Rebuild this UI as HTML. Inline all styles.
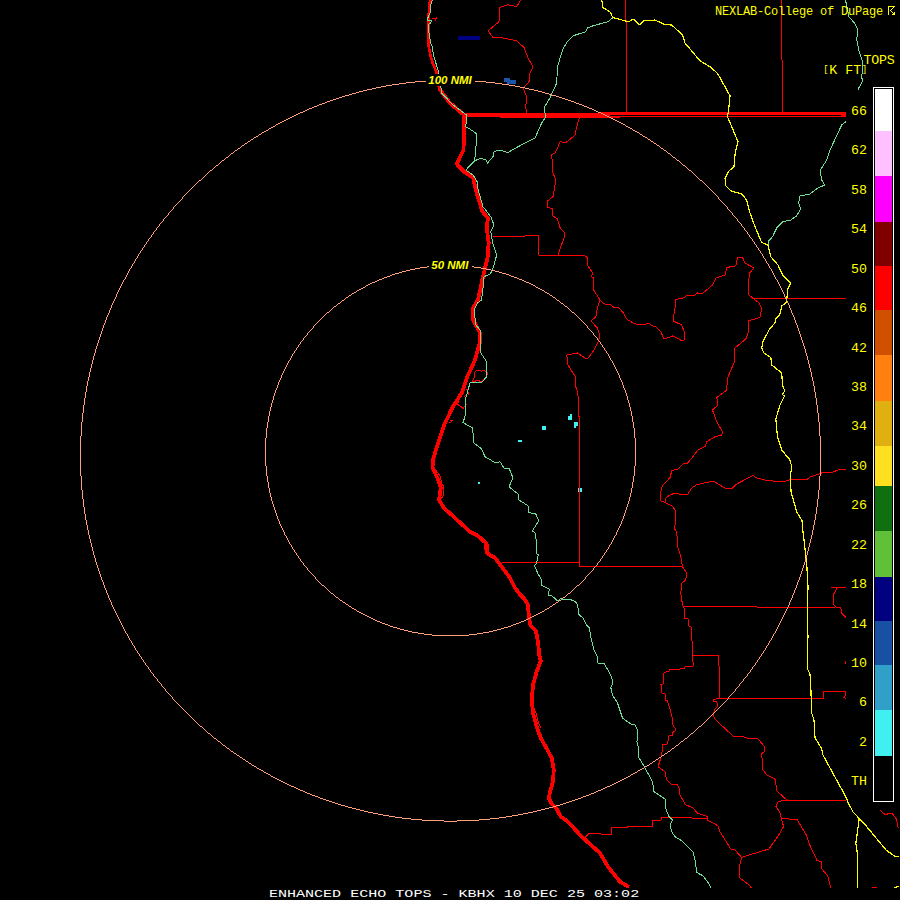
<!DOCTYPE html>
<html><head><meta charset="utf-8"><title>ENHANCED ECHO TOPS - KBHX</title>
<style>
html,body{margin:0;padding:0;background:#000;}
body{width:900px;height:900px;overflow:hidden;}
svg{display:block;}
polyline{fill:none;stroke-linejoin:round;stroke-linecap:butt;}
.c{stroke:#ff0000;stroke-width:3.8;}
.r{stroke:#ff0000;stroke-width:1;}
.g{stroke:#70dc96;stroke-width:1;}
.y{stroke:#ffff00;stroke-width:1.2;}
text{font-family:"Liberation Mono",monospace;fill:#ffff00;}
.t1{font-size:12px;letter-spacing:-0.2px;}
.t2{font-size:13.3px;letter-spacing:0.02px;}
.lb{font-size:13.3px;letter-spacing:0.02px;}
.nm{font-family:"Liberation Sans",sans-serif;font-weight:bold;font-style:italic;font-size:11.5px;}
.bt{fill:#fff;font-size:11.4px;}
</style></head>
<body>
<svg width="900" height="900" viewBox="0 0 900 900">
<rect width="900" height="900" fill="#000"/>
<g shape-rendering="crispEdges">
<!-- radar echoes -->
<rect x="458" y="36" width="22" height="4" fill="#000080"/>
<rect x="504" y="78" width="6" height="4" fill="#1a55aa"/>
<rect x="507" y="80" width="9" height="4" fill="#1a55aa"/>
<rect x="542" y="426" width="4" height="4" fill="#40f0f0"/>
<rect x="518" y="440" width="4" height="2" fill="#40f0f0"/>
<rect x="568" y="416" width="4" height="4" fill="#40f0f0"/>
<rect x="570" y="414" width="2" height="2" fill="#40f0f0"/>
<rect x="574" y="422" width="4" height="4" fill="#40f0f0"/>
<rect x="574" y="426" width="2" height="2" fill="#40f0f0"/>
<rect x="478" y="482" width="2" height="2" fill="#40f0f0"/>
<rect x="578" y="488" width="4" height="4" fill="#40f0f0"/>
</g>
<g shape-rendering="crispEdges">
<polyline class="r" points="520.8,0 516.7,6.7 508,4.7 499.7,7.5 499,21.7 488,30.8 493,37.5 503,38 516.7,40.8 524,47.5 528,58 533,66.7 529,75 529,81.7 523,88 526.7,96.7 525.8,106.7 526.7,115"/>
<polyline class="r" points="579.7,116.7 576.7,126.7 575,135 571.7,138 565.8,142.5 560,141.7 556.7,150 555,153 551,155 553,163 552.5,171.7 555.8,180 553,196.7 550,199 547.5,201 547.3,207 550,208 552.5,208 552.5,215.8 557.5,219 560,227.5 564.7,233 564,238 560.8,246.7 558,255"/>
<polyline class="r" points="492.5,236 525,236 525,235 538.7,235 538.7,255 584,255 587.5,258 587.5,265 592.5,273 591.7,276.7 593.7,278 593.7,290 600,300"/>
<polyline class="r" points="600,300 597.5,308 595.8,316.7 591,321 597.5,328 600,336 598,341.7 593,351.7 588,358 585,358 577.5,353 566.7,355 568,365 575.8,377.5 575,385 577.5,391 578.5,400 578.5,416 579.5,416.5 579.5,566.5 682.5,566.5"/>
<polyline class="r" points="600,300 603,303 607.5,305 610.8,304.7 614,307.5 619,308 623,312.5 626.7,319 633,323 638,324.7 650,323.7 651.7,325.8 655.8,326.7 660.8,331.7 664,339 672.5,336 676.7,338 682.5,341 684,340 685,334 681.7,325 673,320.8 675,308 675,299.5 683,298 688,295 695,295 697.5,293 700,294 703,293 712.5,285 715.8,278 725,275 727,267.5 735.8,265.8 737.5,258 742.5,257.5 745,263 754,268 750,272.5 748,283 749,295 752.5,298 759,303 761.7,308 760,317.5 748,321 748,333 745.8,339 735,348 734,363 727.5,378 726.7,390 716.7,397.5 718,405 712.5,410 716.7,421.7 722.5,431.7 721.7,435 715,436.7 706.7,441.7 705,446.7 700,449 698,450 693,456.7 686.7,464 684,463 678,469 671.7,470.8 670,477.5 662.5,485.8 660.5,492.5 660.8,500.8 665,502.5 673,506.7 675.8,511.7 676,521.7 674,528 676.7,531.7 678,548 680.8,556.7 682.5,566.7 686.7,573 685.8,580 681.7,583 680.8,593 681.7,600 683,606 684,607.5 684.5,618 688,618.7 688.7,625.8 691,626.7 691.7,640 692.5,643 692.5,655 693,661.7 693,666 685,666.7 684.7,668.8 670,669.5 669,671 664,672.8 663,684 661,684.5 661.7,693 665,693.7 665.5,700 667.5,700.8 671.7,715 673,725 676,730 673,732.5 672.5,735 669,735.8 667.5,744 663,744.5 662.5,750 660.8,758 658,766.7 665,771.7 666.7,780 670.8,784 677.5,784.7 679,788 680,795 685.8,805 692.5,807.5 697.5,813 707.5,816.7 707.5,820 718,825.8 720,831.7 730.8,849 735,850 741.7,857.5 739,868 740,878 749,885 751,887.5"/>
<polyline class="r" points="752.5,298.5 845.8,298.5"/>
<polyline class="r" points="665,502.5 665.8,498 670,495 675,493 682.5,495 687.5,494.7 691.7,488 696.7,484.7 700,484 713,481 725,488 732.5,488 736.7,484 753,475.5 756.7,478 766.7,480.5 773,481 785.8,481 790,479.7 798,479 806.7,479.7 810,477 823,472.5 833,472 838,470 845.8,469.5"/>
<polyline class="r" points="501.7,562.5 579.7,562.5"/>
<polyline class="r" points="683,606.5 756.7,606.5 757.5,607.5 835,607.5"/>
<polyline class="r" points="830.8,587.5 845.8,587.5"/>
<polyline class="r" points="836.7,587.5 836.7,589 833,595 834,605 836.7,607.5 840.8,608 841.7,613 845.8,617.5"/>
<polyline class="r" points="692.5,655.5 718.7,655.5 718.7,665.8 719.7,666.7 719.7,698"/>
<polyline class="r" points="713,699.5 719.7,698.5 750,698.5 823,698.5 823,691.5 845,691.5 845.8,695 844,697.5 845.8,698.7"/>
<polyline class="r" points="713,699.5 714,701.7 716.7,702 718,705.8 715,709 713,715 715,719 723,726.7 733,736 743,736.7 746.7,738 750,738.5 757.6,738.5 765,747 764.7,751.7 761.7,753.6 762.8,769.7 767,775 775.5,779.5 776.5,790.5 786.8,800"/>
<polyline class="r" points="786.8,800.5 846.4,800.5"/>
<polyline class="r" points="786.8,800 778.3,801.4 776,806.5 780.2,813 781.2,818.4 783.6,826.4 778.3,835.8 768.9,849 750,854.7 741.7,857.5"/>
<polyline class="r" points="781.2,818.4 797.2,819.7 806.7,835.8 810.5,847 817,860.4 821.4,862 821.8,868.9 827.5,875.5 830.9,887.8"/>
<polyline class="r" points="880.4,810.3 885,814.6 891.7,813 896.4,818.8 898.3,828"/>
<polyline class="r" points="585,837.5 589,833.5 600.8,833.5 601.7,834.5 611,834.5 611,827.5 627.5,827.5 628,826.5 652.5,826.5 652.5,820.5 661,820.5 661.7,817.5 691.7,817.5 692.5,818.5 707.5,818.5"/>
<polyline class="r" points="845.5,661 845.5,664"/>
<polyline class="r" points="625.8,0 626.2,37 626.5,115"/>
<polyline class="r" points="781.7,0 782.3,115"/>
<polyline class="r" points="500,117.5 620,117.5"/>
<polyline class="r" points="475.8,370.9 479.8,370.4 481.6,371.3 484.2,370.3 486.2,371.8 486,377.1 482.4,381.1 480.7,381.6 478,380.2 473.6,381.6 471.3,382.9 474.4,377.6 474,374 475.8,370.9"/>
<polyline class="r" points="487.5,372 487.5,375"/>
<polyline class="r" points="466,389.5 468,389.5"/>
<polyline class="r" points="468.5,392 468.5,394.5"/>
<polyline class="r" points="464.2,396.5 466.4,395.5"/>
<polyline class="r" points="465.5,402 466.5,405.5"/>
<polyline class="r" points="459.3,400.7 457.1,404.2 460.7,406.4 463.8,409.1 464.2,406"/>
<polyline class="r" points="450,420.2 452.2,420.7 450.4,422.4 449.1,422"/>
<polyline class="r" points="434,467.3 440,476 442,484 443.7,486.7 443.7,494.7 441.3,498.7"/>
<polyline class="r" points="487.3,542.7 488.7,545.3 488.7,550.7 486.7,553"/>
<polyline class="r" points="534,708 536.7,715 537.5,720 540.8,728"/>
<polyline class="r" points="432,19 436.7,17.8 435,21.3"/>
<polyline class="r" points="750,886.5 751.5,888"/>
<polyline class="r" points="872.4,887.5 876.6,887.5"/>
<polyline class="c" style="stroke-width:2.6" points="430.4,0 429,5.3 428.7,17.8 428.2,30.2 428.2,44.4 430.9,56.9 433,64 437,72.9 438,78"/>
<polyline class="c" points="437,72.9 440,90 450,103 464,115 464,130 463.5,150 456.7,164 464,171.7 473,177.5 476.7,193 482.5,211.7 488,218 486.7,228 488.7,243 487.5,258 483,276.7 478,300 473,308 473,320 477.5,328 480,333 479.7,343 475,360 466.7,378 461.7,393 453,406.7 445,423 435.8,450 433,460 432.5,468 437.5,478 440.8,488 439,500 444,508 455,518 470,531.7 478,535.8 485.8,543 486.7,553 495,558 501.7,566.7 510,578 515,588 520,594.5 524.4,598.8 527.8,604.4 529,617.8 530.6,625.6 536,631 538.3,644 539,654 540.8,660.8 536.7,671.7 533,685 531.7,700 533,713 536.7,726.7 540.8,738 547.5,750 551.7,758 553.7,770 553,781.7 550,791.7 548.8,798 551.7,804 556.7,809 560.8,816.7 568,821.7 581.7,836.7 600,853 608,866.7 620,881.7 629,887"/>
<g fill="#ff0000"><rect x="464" y="113" width="146" height="4"/><rect x="600" y="112" width="246" height="3"/><rect x="600" y="116" width="246" height="1"/><rect x="841" y="113" width="5" height="4"/></g>
<polyline class="g" points="432.2,0 430.6,5.3 430,13.3 427.3,19 427.8,20.9 431.3,20.9 430.9,23 428.7,24 429,32.9 430.9,43.6 432.2,46.2 433.6,56 438.4,71 441.7,93 453,105 466.7,115 465.8,126.7 473,131 476.7,134 475.8,150 474.5,161 465.8,170 473,175 478,183 477.5,187.5 483,206.7 490.8,216.7 494,225 490.8,231.7 492.5,242.5 496.7,255 492.5,270 490,274 484,276.7 483,288 481.5,300 477.5,303 474,310 475.8,325 481,331 480.8,353 486.7,361.7 486.7,376.7 481.7,382.5 470,383 465.8,398 465,416.7 463,422.5 472.5,428 474,443 481.7,449 485,456.7 495.8,463 500,461.7 504,468 509,468 513,478 509,486.7 518,494 519,500 528,505.8 529,512.5 535.8,514 538.7,520.8 532.5,530.8 535.8,534 536.7,554 538.3,554.5 536.7,563 534.4,565.6 538.3,574.4 541,579 542,585.6 546.7,587.8 549.4,589.4 548.3,595 552,596 557.8,601 560.6,598.3 563.3,599.4 569,599 575.6,601.7 577.8,605.6 578.7,614.4 583.3,618.3 586.7,625 589.4,627.8 591,637.8 593.9,650 597,655.6 598,663 603.7,663 610.8,675 613,683 610.8,687.5 612.5,695 617.5,703 622.5,718 630.8,724 635,725 637.5,730 637,741.7 638.8,750 638,756 645,768 652.5,781.7 654,791.7 665,799 665,806.7 669,816.7 672.5,820 670,825 671.7,831.7 675,836.7 681.7,840.8 693,851.7 695,860 696.7,872.5 703,875.8 708,882.5 710.8,887.5"/>
<polyline class="g" points="474.5,161 480.8,158 485.8,160 487.5,163 493,156.7 494,151.7 500,150 508,152.5 513,149.5 525,143 535,138 541.7,123 545.8,116.7 544,108 550,97.8 556.7,83 557.5,66.7 562.5,50 566.7,42.5 573,35.8 585.8,31.7 587.5,28 593,25.8 608,21.7 612.5,18"/>
<polyline class="g" points="845.5,0 849,17 854.5,23 858,29.5 856.7,39 859,51 863,63 861.7,77.8 862.8,80.5 858,89.5"/>
<polyline class="g" points="845.8,121.7 841.7,125 830,150 826.7,160 820,170.8 821.7,180 824.7,185 818,188 810,194 799.7,196 798.7,203 800.8,209 796.7,215.8 790.8,220 783,221.7 776.7,228 772.5,236.7 768,241.7 768,245"/>
<polyline class="y" points="601.7,0 603,7.5 610.8,12.5 612.5,17.5 625.8,21 629,21.7 633,19 640,25 643,21 655,20 665,24.7 671.7,25 682.5,35 685,43 700,60.8 710,66.7 717.5,73.3 730,95.8 729,106.7 727.5,116.7 738,141.7 735.8,150 735,155 734,166.7 729,171 725,178 725.8,185.8 730.8,190.8 741.7,194 746.7,200 750,213 755,226.7 761.7,242.5 768,245 770.8,256.7 778,265 783,275.8 790.8,283 788,288 786.7,300 785.8,303 781.7,305.8 780,314 775.8,319 775.8,321.7 769,330 763,341.7 761.7,348 764,353 770.8,357.5 771.7,365 781.7,373 782.5,385 784.7,390.8 782.5,394.7 784.7,395.8 780,405 775.8,419 777.5,436.7 781.7,450 790,460 791.7,466.7 790.5,475 791,491.7 796.7,511.7 802,520.8 803,531.7 806.7,563 808,586.7 807.5,608 807.5,633 808,635 807.5,651.7 807.5,669 810,674 810.8,686.7 811.7,713 814,720 814.5,730 815,737.6 821.8,749 822.7,754.6 845.4,796 848.2,802.7 853,812 859.2,818.4 863.4,822.6 886,850 894.5,856 899,856.6"/>
<polyline class="y" points="859.2,818.4 857.7,830 855.8,843.4 857.3,852.8 857.7,887.8"/>
<polyline class="y" points="894.5,887.8 899,886"/>
</g>
<!-- range rings -->
<g fill="none" stroke="#ffa07a" stroke-width="1" shape-rendering="crispEdges">
<path d="M422 820.5h22M457 820.5h22M280 122.5h2M619 122.5h2M367 89.5h5M529 89.5h5M273 777.5h2M626 777.5h2M352 93.5h4M545 93.5h4M364 811.5h4M533 811.5h4M314 106.5h3M584 106.5h3M332 802.5h3M566 802.5h3M402 818.5h9M490 818.5h9M227 748.5h2M672 748.5h2M444 821.5h13M338 804.5h3M560 804.5h3M341 805.5h4M556 805.5h4M392 84.5h7M502 84.5h7M231 153.5h2M668 153.5h2M336 98.5h3M562 98.5h3M389 816.5h6M506 816.5h6M251 139.5h2M648 139.5h2M427 80.5h47M399 83.5h7M495 83.5h7M310 794.5h2M589 794.5h2M303 791.5h2M596 791.5h2M294 787.5h2M605 787.5h2M296 114.5h2M603 114.5h2M415 81.5h12M474 81.5h12M395 817.5h7M499 817.5h7M296 788.5h2M603 788.5h2M327 101.5h3M571 101.5h3M287 784.5h2M612 784.5h2M223 745.5h2M676 745.5h2M376 87.5h5M520 87.5h5M246 761.5h2M653 761.5h2M300 790.5h3M598 790.5h3M411 819.5h11M479 819.5h11M199 180.5h2M700 180.5h2M378 814.5h5M518 814.5h5M235 150.5h2M664 150.5h2M262 132.5h2M637 132.5h2M359 91.5h4M538 91.5h4M352 808.5h4M545 808.5h4M368 812.5h5M528 812.5h5M245 143.5h2M654 143.5h2M317 105.5h2M582 105.5h2M345 806.5h3M553 806.5h3M279 780.5h2M620 780.5h2M257 768.5h2M642 768.5h2M307 793.5h3M591 793.5h3M242 145.5h2M657 145.5h2M383 815.5h6M512 815.5h6M312 795.5h3M586 795.5h3M231 751.5h2M668 751.5h2M349 94.5h3M549 94.5h3M240 757.5h2M659 757.5h2M356 92.5h3M542 92.5h3M271 127.5h2M628 127.5h2M300 112.5h3M598 112.5h3M372 88.5h4M525 88.5h4M386 85.5h6M509 85.5h6M290 117.5h2M609 117.5h2M286 119.5h2M613 119.5h2M216 165.5h2M683 165.5h2M406 82.5h9M486 82.5h9M305 110.5h2M594 110.5h2M345 95.5h4M552 95.5h4M291 786.5h3M607 786.5h3M320 798.5h3M578 798.5h3M271 776.5h2M628 776.5h2M254 766.5h2M645 766.5h2M238 148.5h2M661 148.5h2M339 97.5h3M559 97.5h3M256 136.5h2M643 136.5h2M278 123.5h2M621 123.5h2M226 157.5h2M673 157.5h2M363 90.5h4M534 90.5h4M360 810.5h4M537 810.5h4M329 801.5h3M569 801.5h3M322 103.5h3M576 103.5h3M335 803.5h3M563 803.5h3M330 100.5h3M568 100.5h3M261 770.5h2M638 770.5h2M326 800.5h3M572 800.5h3M269 128.5h2M630 128.5h2M214 738.5h2M685 738.5h2M276 124.5h2M623 124.5h2M284 120.5h2M615 120.5h2M294 115.5h2M605 115.5h2M259 134.5h2M640 134.5h2M282 121.5h2M617 121.5h2M356 809.5h4M541 809.5h4M298 789.5h2M601 789.5h2M381 86.5h5M515 86.5h5M208 733.5h2M691 733.5h2M200 726.5h2M699 726.5h2M333 99.5h3M565 99.5h3M275 778.5h2M624 778.5h2M264 131.5h2M635 131.5h2M323 799.5h3M575 799.5h3M319 104.5h3M579 104.5h3M264 772.5h2M635 772.5h2M292 116.5h2M607 116.5h2M298 113.5h2M601 113.5h2M281 781.5h2M618 781.5h2M315 796.5h3M583 796.5h3M285 783.5h2M614 783.5h2M254 137.5h2M645 137.5h2M305 792.5h2M594 792.5h2M283 782.5h2M616 782.5h2M268 774.5h2M631 774.5h2M210 170.5h2M689 170.5h2M222 160.5h2M677 160.5h2M266 130.5h2M633 130.5h2M303 111.5h2M596 111.5h2M325 102.5h2M574 102.5h2M273 126.5h2M626 126.5h2M312 107.5h2M587 107.5h2M237 755.5h2M662 755.5h2M266 773.5h2M633 773.5h2M288 118.5h2M611 118.5h2M277 779.5h2M622 779.5h2M249 763.5h2M650 763.5h2M259 769.5h2M640 769.5h2M348 807.5h4M549 807.5h4M248 141.5h2M651 141.5h2M373 813.5h5M523 813.5h5M342 96.5h3M556 96.5h3M252 765.5h2M647 765.5h2M309 108.5h3M589 108.5h3M243 759.5h2M656 759.5h2M289 785.5h2M610 785.5h2M218 741.5h2M681 741.5h2M307 109.5h2M592 109.5h2M318 797.5h2M581 797.5h2M234 753.5h2M665 753.5h2M796.5 323v2M796.5 585v3M105.5 320v3M105.5 588v2M185.5 194v1M185.5 711v1M749.5 235v2M749.5 672v1M83.5 405v8M83.5 499v8M93.5 356v4M93.5 551v4M109.5 310v3M109.5 598v2M720.5 200v1M720.5 706v1M152.5 234v1M152.5 673v1M87.5 381v5M87.5 525v5M728.5 209v1M728.5 697v2M97.5 343v3M97.5 565v3M817.5 405v8M817.5 499v8M800.5 334v3M800.5 574v3M819.5 422v14M819.5 476v14M810.5 368v4M810.5 539v4M84.5 398v7M84.5 507v7M705.5 184v1M705.5 721v1M81.5 422v14M81.5 476v14M771.5 269v2M771.5 638v2M793.5 315v2M793.5 593v2M229.5 155v1M229.5 749v1M756.5 245v2M756.5 662v1M137.5 256v2M137.5 651v2M694.5 174v1M694.5 731v1M727.5 207v2M727.5 699v1M111.5 305v3M111.5 602v3M92.5 360v4M92.5 547v4M744.5 228v2M744.5 678v1M91.5 364v4M91.5 543v4M204.5 176v1M204.5 729v1M251.5 764v1M785.5 297v2M785.5 611v2M783.5 292v2M783.5 615v2M818.5 413v9M818.5 490v9M788.5 303v2M788.5 605v2M795.5 320v3M795.5 588v2M112.5 303v2M112.5 605v2M82.5 413v9M82.5 490v9M184.5 195v1M184.5 710v1M117.5 292v2M117.5 615v2M716.5 195v1M716.5 710v1M712.5 191v1M712.5 714v1M141.5 250v1M141.5 657v2M144.5 245v2M144.5 662v1M763.5 256v2M763.5 651v2M96.5 346v3M96.5 562v3M802.5 340v3M802.5 568v3M188.5 191v1M188.5 714v1M812.5 377v4M812.5 530v5M156.5 228v2M156.5 678v1M787.5 301v2M787.5 607v2M90.5 368v4M90.5 539v4M100.5 334v3M100.5 574v3M125.5 277v2M125.5 631v2M88.5 377v4M88.5 530v5M126.5 275v2M126.5 633v1M813.5 381v5M813.5 525v5M792.5 313v2M792.5 595v3M667.5 152v1M667.5 752v1M782.5 290v2M782.5 617v2M247.5 142v1M191.5 188v1M191.5 717v1M738.5 221v1M738.5 686v1M116.5 294v3M116.5 613v2M172.5 209v1M172.5 697v2M148.5 239v2M148.5 667v2M94.5 353v3M94.5 555v3M804.5 346v3M804.5 562v3M104.5 323v2M104.5 585v3M192.5 187v1M192.5 718v1M759.5 250v1M759.5 657v2M704.5 183v1M704.5 722v1M162.5 221v1M162.5 686v1M731.5 212v1M731.5 694v1M693.5 173v1M693.5 732v1M80.5 436v40M809.5 364v4M809.5 543v4M808.5 360v4M808.5 547v4M121.5 284v2M121.5 623v2M99.5 337v3M99.5 571v3M697.5 177v1M697.5 728v1M816.5 398v7M816.5 507v7M180.5 200v1M180.5 706v1M799.5 331v3M799.5 577v3M198.5 181v1M198.5 724v1M215.5 166v1M803.5 343v3M803.5 565v3M129.5 269v2M129.5 638v2M199.5 725v1M210.5 734v1M132.5 264v2M132.5 643v2M737.5 219v2M737.5 687v1M807.5 356v4M807.5 551v4M684.5 739v1M108.5 313v2M108.5 595v3M739.5 222v1M739.5 684v2M195.5 184v1M195.5 721v1M133.5 263v1M133.5 645v1M173.5 207v2M173.5 699v1M122.5 282v2M122.5 625v2M89.5 372v5M89.5 535v4M225.5 158v1M225.5 746v1M791.5 310v3M791.5 598v2M752.5 239v2M752.5 667v2M755.5 244v1M755.5 663v2M711.5 190v1M711.5 715v1M748.5 234v1M748.5 673v1M239.5 756v1M805.5 349v4M805.5 558v4M726.5 206v1M726.5 700v1M183.5 196v1M183.5 709v1M161.5 222v1M161.5 684v2M747.5 232v2M747.5 674v2M750.5 237v1M750.5 670v2M798.5 328v3M798.5 580v2M241.5 146v1M140.5 251v2M140.5 656v1M261.5 133v1M762.5 254v2M762.5 653v1M253.5 138v1M165.5 217v1M165.5 689v2M786.5 299v2M786.5 609v2M135.5 259v2M135.5 648v2M164.5 218v1M164.5 688v1M708.5 187v1M708.5 718v1M219.5 163v1M663.5 149v1M128.5 271v2M128.5 636v2M136.5 258v1M136.5 650v1M159.5 224v2M159.5 682v1M688.5 169v1M688.5 736v1M784.5 294v3M784.5 613v2M139.5 253v1M139.5 654v2M115.5 297v2M115.5 611v2M147.5 241v1M147.5 666v1M766.5 261v2M766.5 646v2M723.5 203v1M723.5 703v1M150.5 237v1M150.5 670v2M153.5 232v2M153.5 674v2M206.5 174v1M206.5 731v1M175.5 205v1M175.5 701v1M806.5 353v3M806.5 555v3M86.5 386v6M86.5 520v5M106.5 317v3M106.5 590v3M154.5 231v1M154.5 676v1M815.5 392v6M815.5 514v6M95.5 349v4M95.5 558v4M85.5 392v6M85.5 514v6M775.5 277v2M775.5 631v2M167.5 215v1M167.5 692v1M179.5 201v1M179.5 705v1M190.5 189v1M190.5 716v1M811.5 372v5M811.5 535v4M113.5 301v2M113.5 607v2M220.5 162v1M220.5 742v1M735.5 217v1M735.5 689v2M110.5 308v2M110.5 600v2M729.5 210v1M729.5 696v1M820.5 436v40M715.5 194v1M715.5 711v1M230.5 154v1M230.5 750v1M187.5 192v1M187.5 713v1M730.5 211v1M730.5 695v1M124.5 279v1M124.5 629v2M127.5 273v2M127.5 634v2M143.5 247v1M143.5 660v2M213.5 168v1M213.5 737v1M801.5 337v3M801.5 571v3M769.5 266v2M769.5 641v2M794.5 317v3M794.5 590v3M182.5 197v2M182.5 708v1M746.5 231v1M746.5 676v1M703.5 182v1M703.5 723v1M758.5 248v2M758.5 659v1M707.5 186v1M707.5 719v1M205.5 175v1M205.5 730v1M659.5 146v1M134.5 261v2M134.5 646v2M103.5 325v3M103.5 582v3M718.5 197v2M718.5 708v1M107.5 315v2M107.5 593v2M722.5 202v1M722.5 704v1M751.5 238v1M751.5 669v1M194.5 185v1M194.5 720v1M675.5 158v1M675.5 746v1M814.5 386v6M814.5 520v5M741.5 224v2M741.5 682v1M765.5 259v2M765.5 648v2M644.5 767v1M679.5 161v1M679.5 743v1M186.5 193v1M186.5 712v1M781.5 288v2M781.5 619v2M625.5 125v1M696.5 176v1M696.5 729v1M130.5 268v1M130.5 640v1M171.5 210v1M171.5 696v1M123.5 280v2M123.5 627v2M706.5 185v1M706.5 720v1M131.5 266v2M131.5 641v2M761.5 253v1M761.5 654v2M721.5 201v1M721.5 705v1M780.5 286v2M780.5 621v2M777.5 280v2M777.5 627v2M193.5 186v1M193.5 719v1M740.5 223v1M740.5 683v1M248.5 762v1M216.5 739v1M790.5 308v2M790.5 600v2M120.5 286v2M120.5 621v2M754.5 242v2M754.5 665v1M157.5 227v1M157.5 679v2M695.5 175v1M695.5 730v1M114.5 299v2M114.5 609v2M690.5 734v1M725.5 205v1M725.5 701v1M163.5 219v2M163.5 687v1M797.5 325v3M797.5 582v3M773.5 273v2M773.5 634v2M652.5 762v1M683.5 740v1M177.5 203v1M177.5 703v1M776.5 279v1M776.5 629v2M146.5 242v2M146.5 665v1M201.5 179v1M713.5 192v1M713.5 713v1M155.5 230v1M155.5 677v1M664.5 754v1M158.5 226v1M158.5 681v1M732.5 213v2M732.5 693v1M687.5 168v1M687.5 737v1M98.5 340v3M98.5 568v3M138.5 254v2M138.5 653v1M714.5 193v1M714.5 712v1M757.5 247v1M757.5 660v2M102.5 328v3M102.5 580v2M142.5 248v2M142.5 659v1M772.5 271v2M772.5 636v2M779.5 284v2M779.5 623v2M240.5 147v1M650.5 140v1M166.5 216v1M166.5 691v1M221.5 161v1M221.5 743v1M710.5 189v1M710.5 716v1M189.5 190v1M189.5 715v1M753.5 241v1M753.5 666v1M244.5 144v1M701.5 725v1M101.5 331v3M101.5 577v3M768.5 264v2M768.5 643v2M208.5 172v1M211.5 735v1M222.5 744v1M174.5 206v1M174.5 700v1M145.5 244v1M145.5 663v2M226.5 747v1M245.5 760v1M789.5 305v3M789.5 602v3M658.5 758v1M169.5 212v1M169.5 694v1M119.5 288v2M119.5 619v2M670.5 154v1M670.5 750v1M717.5 196v1M717.5 709v1M764.5 258v1M764.5 650v1M181.5 199v1M181.5 707v1M680.5 162v1M680.5 742v1M674.5 747v1M642.5 135v1M724.5 204v1M724.5 702v1M212.5 169v1M212.5 736v1M149.5 238v1M149.5 669v1M270.5 775v1M745.5 230v1M745.5 677v1M743.5 227v1M743.5 679v2M778.5 282v2M778.5 625v2M236.5 754v1M702.5 181v1M702.5 724v1M742.5 226v1M742.5 681v1M203.5 177v1M203.5 728v1M118.5 290v2M118.5 617v2M774.5 275v2M774.5 633v1M207.5 173v1M207.5 732v1M678.5 744v1M196.5 183v1M196.5 722v1M660.5 147v1M760.5 251v2M760.5 656v1M709.5 188v1M709.5 717v1M234.5 151v1M168.5 213v2M168.5 693v1M258.5 135v1M686.5 167v1M250.5 140v1M630.5 775v1M217.5 740v1M689.5 735v1M767.5 263v1M767.5 645v1M160.5 223v1M160.5 683v1M719.5 199v1M719.5 707v1M734.5 216v1M734.5 691v1M656.5 144v1M268.5 129v1M214.5 167v1M151.5 235v2M151.5 672v1M218.5 164v1M176.5 204v1M176.5 702v1M770.5 268v1M770.5 640v1M671.5 155v1M671.5 749v1M682.5 164v1M685.5 166v1M733.5 215v1M733.5 692v1M649.5 764v1M661.5 756v1M202.5 178v1M202.5 727v1M637.5 771v1M647.5 138v1M666.5 151v1M691.5 171v1M681.5 163v1M692.5 172v1M233.5 152v1M233.5 752v1M197.5 182v1M197.5 723v1M237.5 149v1M242.5 758v1M698.5 178v1M698.5 727v1M699.5 179v1M178.5 202v1M178.5 704v1M736.5 218v1M736.5 688v1M639.5 133v1M632.5 129v1M170.5 211v1M170.5 695v1M676.5 159v1M263.5 771v1M209.5 171v1M275.5 125v1M224.5 159v1M256.5 767v1M655.5 760v1M672.5 156v1M653.5 142v1M228.5 156v1"/>
<path d="M377 621.5h3M521 621.5h3M420 267.5h7M474 267.5h7M424 634.5h8M469 634.5h8M382 623.5h3M516 623.5h3M404 630.5h4M493 630.5h4M369 617.5h2M530 617.5h2M361 613.5h2M538 613.5h2M368 284.5h2M531 284.5h2M390 275.5h2M509 275.5h2M437 265.5h27M410 269.5h5M486 269.5h5M367 616.5h2M532 616.5h2M388 625.5h2M511 625.5h2M397 628.5h3M501 628.5h3M352 293.5h2M547 293.5h2M365 615.5h2M534 615.5h2M357 611.5h2M542 611.5h2M331 593.5h2M568 593.5h2M346 297.5h2M553 297.5h2M408 631.5h4M489 631.5h4M379 279.5h3M519 279.5h3M432 635.5h37M402 271.5h4M495 271.5h4M385 624.5h3M513 624.5h3M354 609.5h2M545 609.5h2M427 266.5h10M464 266.5h10M399 272.5h3M499 272.5h3M406 270.5h4M491 270.5h4M384 277.5h3M514 277.5h3M412 632.5h6M483 632.5h6M380 622.5h2M519 622.5h2M371 618.5h2M528 618.5h2M393 627.5h4M504 627.5h4M415 268.5h5M481 268.5h5M352 608.5h2M547 608.5h2M395 273.5h4M502 273.5h4M387 276.5h3M511 276.5h3M340 600.5h2M559 600.5h2M349 606.5h2M550 606.5h2M375 281.5h2M524 281.5h2M336 597.5h2M563 597.5h2M390 626.5h3M508 626.5h3M354 292.5h2M545 292.5h2M370 283.5h2M529 283.5h2M392 274.5h3M506 274.5h3M346 604.5h2M553 604.5h2M400 629.5h4M497 629.5h4M418 633.5h6M477 633.5h6M334 306.5h2M565 306.5h2M322 585.5h2M577 585.5h2M338 303.5h2M561 303.5h2M327 312.5h2M572 312.5h2M363 287.5h2M536 287.5h2M382 278.5h2M517 278.5h2M359 289.5h2M540 289.5h2M366 285.5h2M533 285.5h2M373 619.5h2M526 619.5h2M372 282.5h3M526 282.5h3M342 300.5h2M557 300.5h2M377 280.5h2M522 280.5h2M375 620.5h2M524 620.5h2M359 612.5h2M540 612.5h2M363 614.5h2M536 614.5h2M349 295.5h2M550 295.5h2M361 288.5h2M538 288.5h2M357 290.5h2M542 290.5h2M343 602.5h2M556 602.5h2M270.5 407v4M270.5 493v4M619.5 375v3M619.5 526v2M282.5 373v2M282.5 528v2M620.5 378v2M620.5 524v2M630.5 407v4M630.5 493v4M298.5 345v2M298.5 556v2M612.5 361v2M612.5 540v2M624.5 388v2M624.5 513v3M631.5 411v5M631.5 488v5M344.5 299v1M284.5 369v2M284.5 532v3M610.5 358v2M610.5 544v1M572.5 590v1M628.5 400v3M628.5 501v3M274.5 393v3M274.5 507v3M269.5 411v5M269.5 488v5M324.5 315v1M324.5 586v1M267.5 422v6M267.5 476v6M303.5 338v2M303.5 563v2M281.5 375v3M281.5 526v2M356.5 291v1M356.5 610v1M608.5 354v2M608.5 547v2M632.5 416v6M632.5 482v6M348.5 296v1M348.5 605v1M325.5 314v1M325.5 587v1M599.5 341v1M599.5 561v1M580.5 319v1M580.5 583v1M294.5 351v2M294.5 550v2M306.5 335v1M306.5 567v1M623.5 385v3M623.5 516v3M273.5 396v4M273.5 504v3M333.5 307v1M333.5 594v1M278.5 382v3M278.5 519v2M606.5 351v2M606.5 550v2M591.5 331v1M591.5 571v1M594.5 335v1M594.5 567v1M271.5 403v4M271.5 497v4M633.5 422v6M633.5 476v6M587.5 326v2M587.5 575v1M290.5 358v2M290.5 544v1M626.5 393v3M626.5 507v3M302.5 340v1M302.5 562v1M317.5 322v1M317.5 580v1M268.5 416v6M268.5 482v6M579.5 318v1M579.5 584v1M598.5 340v1M598.5 562v1M280.5 378v2M280.5 524v2M312.5 328v1M312.5 574v1M618.5 373v2M618.5 528v2M583.5 322v1M583.5 580v1M568.5 308v1M586.5 325v1M586.5 576v1M635.5 438v28M629.5 403v4M629.5 497v4M549.5 294v1M549.5 607v1M555.5 298v1M555.5 603v1M277.5 385v3M277.5 516v3M622.5 382v3M622.5 519v2M627.5 396v4M627.5 504v3M614.5 365v2M614.5 536v2M320.5 319v1M320.5 583v1M301.5 341v1M301.5 561v1M321.5 318v1M321.5 584v1M597.5 338v2M597.5 563v2M266.5 428v10M266.5 466v10M288.5 361v2M288.5 540v2M602.5 345v2M602.5 556v2M309.5 331v1M309.5 571v1M292.5 354v2M292.5 547v2M634.5 428v10M634.5 466v10M313.5 326v2M313.5 575v1M574.5 313v1M574.5 588v1M304.5 337v1M304.5 565v1M276.5 388v2M276.5 513v3M567.5 307v1M567.5 594v1M563.5 304v1M564.5 305v1M596.5 337v1M596.5 565v1M625.5 390v3M625.5 510v3M565.5 596v1M305.5 336v1M305.5 566v1M319.5 320v1M319.5 582v1M613.5 363v2M613.5 538v2M279.5 380v2M279.5 521v3M275.5 390v3M275.5 510v3M327.5 589v1M272.5 400v3M272.5 501v3M300.5 342v2M300.5 559v2M590.5 330v1M590.5 572v1M265.5 438v28M617.5 371v2M617.5 530v2M342.5 601v1M589.5 329v1M589.5 573v1M609.5 356v2M609.5 545v2M600.5 342v2M600.5 559v2M593.5 333v2M593.5 568v2M291.5 356v2M291.5 545v2M605.5 350v1M605.5 552v1M326.5 313v1M326.5 588v1M588.5 328v1M588.5 574v1M559.5 301v1M315.5 324v1M315.5 577v2M621.5 380v2M621.5 521v3M570.5 310v1M570.5 592v1M316.5 323v1M316.5 579v1M287.5 363v2M287.5 538v2M289.5 360v1M289.5 542v2M311.5 329v1M311.5 573v1M314.5 325v1M314.5 576v1M585.5 324v1M585.5 577v2M293.5 353v1M293.5 549v1M286.5 365v2M286.5 536v2M307.5 333v2M307.5 568v2M569.5 309v1M581.5 320v1M581.5 582v1M308.5 332v1M308.5 570v1M365.5 286v1M616.5 369v2M616.5 532v3M573.5 589v1M323.5 316v1M604.5 348v2M604.5 553v2M337.5 304v1M576.5 315v1M576.5 586v1M611.5 360v1M611.5 542v2M341.5 301v1M330.5 310v1M330.5 592v1M345.5 298v1M345.5 603v1M351.5 294v1M351.5 607v1M552.5 296v1M552.5 605v1M544.5 291v1M544.5 610v1M296.5 348v2M296.5 553v2M285.5 367v2M285.5 535v1M592.5 332v1M592.5 570v1M615.5 367v2M615.5 535v1M329.5 311v1M329.5 591v1M571.5 311v1M571.5 591v1M575.5 314v1M575.5 587v1M595.5 336v1M595.5 566v1M295.5 350v1M295.5 552v1M607.5 353v1M607.5 549v1M601.5 344v1M601.5 558v1M297.5 347v1M297.5 555v1M582.5 321v1M582.5 581v1M328.5 590v1M339.5 599v1M310.5 330v1M310.5 572v1M332.5 308v1M299.5 344v1M299.5 558v1M336.5 305v1M338.5 598v1M340.5 302v1M558.5 601v1M560.5 302v1M335.5 596v1M603.5 347v1M603.5 555v1M556.5 299v1M562.5 598v1M566.5 595v1M577.5 316v1M334.5 595v1M283.5 371v2M283.5 530v2M578.5 317v1M331.5 309v1M584.5 323v1M584.5 579v1M318.5 321v1M318.5 581v1M561.5 599v1M535.5 286v1M322.5 317v1"/>
</g>
<!-- range labels -->
<rect x="426" y="74" width="49" height="12" fill="#000"/>
<rect x="429" y="259" width="43" height="12" fill="#000"/>
<text class="nm" x="428.3" y="84">100 NMI</text>
<text class="nm" x="431.3" y="269">50 NMI</text>
<!-- legend -->
<g shape-rendering="crispEdges">
<rect x="875" y="87" width="17" height="44" fill="#ffffff"/>
<rect x="875" y="131" width="17" height="45" fill="#ffc0ff"/>
<rect x="875" y="176" width="17" height="46" fill="#ff00ff"/>
<rect x="875" y="222" width="17" height="44" fill="#800000"/>
<rect x="875" y="266" width="17" height="44" fill="#ff0000"/>
<rect x="875" y="310" width="17" height="45" fill="#d05000"/>
<rect x="875" y="355" width="17" height="46" fill="#ff8010"/>
<rect x="875" y="401" width="17" height="45" fill="#e0b010"/>
<rect x="875" y="446" width="17" height="40" fill="#ffe020"/>
<rect x="875" y="486" width="17" height="45" fill="#107010"/>
<rect x="875" y="531" width="17" height="46" fill="#60c038"/>
<rect x="875" y="577" width="17" height="44" fill="#000080"/>
<rect x="875" y="621" width="17" height="44" fill="#1850a4"/>
<rect x="875" y="665" width="17" height="45" fill="#30a0c8"/>
<rect x="875" y="710" width="17" height="46" fill="#40f0f0"/>
<rect x="875" y="756" width="17" height="46" fill="#000000"/>
<rect x="873.5" y="87.5" width="20" height="714" fill="none" stroke="#fff" stroke-width="1"/>
<rect x="874.5" y="88.5" width="18" height="712" fill="none" stroke="#000" stroke-width="1"/>
</g>
<text class="lb" x="867" y="115.0" text-anchor="end">66</text>
<text class="lb" x="867" y="154.4" text-anchor="end">62</text>
<text class="lb" x="867" y="193.8" text-anchor="end">58</text>
<text class="lb" x="867" y="233.3" text-anchor="end">54</text>
<text class="lb" x="867" y="272.7" text-anchor="end">50</text>
<text class="lb" x="867" y="312.1" text-anchor="end">46</text>
<text class="lb" x="867" y="351.5" text-anchor="end">42</text>
<text class="lb" x="867" y="390.9" text-anchor="end">38</text>
<text class="lb" x="867" y="430.4" text-anchor="end">34</text>
<text class="lb" x="867" y="469.8" text-anchor="end">30</text>
<text class="lb" x="867" y="509.2" text-anchor="end">26</text>
<text class="lb" x="867" y="548.6" text-anchor="end">22</text>
<text class="lb" x="867" y="588.0" text-anchor="end">18</text>
<text class="lb" x="867" y="627.5" text-anchor="end">14</text>
<text class="lb" x="867" y="666.9" text-anchor="end">10</text>
<text class="lb" x="867" y="706.3" text-anchor="end">6</text>
<text class="lb" x="867" y="745.7" text-anchor="end">2</text>
<text class="lb" x="867" y="785.1" text-anchor="end">TH</text>

<text class="t1" x="714.9" y="15">NEXLAB-College of DuPage</text>
<g fill="#ffff00" shape-rendering="crispEdges">
<rect x="888" y="6" width="1" height="9"/><rect x="888" y="6" width="7" height="1"/>
<rect x="893" y="7" width="1" height="1"/><rect x="892" y="8" width="1" height="1"/><rect x="891" y="9" width="1" height="1"/><rect x="890" y="10" width="1" height="1"/>
<rect x="891" y="11" width="1" height="1"/><rect x="892" y="12" width="1" height="1"/><rect x="894" y="12" width="1" height="1"/>
<rect x="893" y="13" width="2" height="1"/><rect x="892" y="14" width="3" height="1"/>
</g>
<text class="t2" x="863.5" y="64" style="letter-spacing:-0.2px">TOPS</text>
<text class="t2" y="74"><tspan x="823.2" y="72.3" font-size="9px">[</tspan><tspan x="829.2" y="74">K FT</tspan><tspan x="861.8" y="72.3" font-size="9px">]</tspan></text>
<text class="bt" x="268.9" y="897" textLength="370.3" lengthAdjust="spacingAndGlyphs">ENHANCED ECHO TOPS - KBHX 10 DEC 25 03:02</text>
</svg>
</body></html>
